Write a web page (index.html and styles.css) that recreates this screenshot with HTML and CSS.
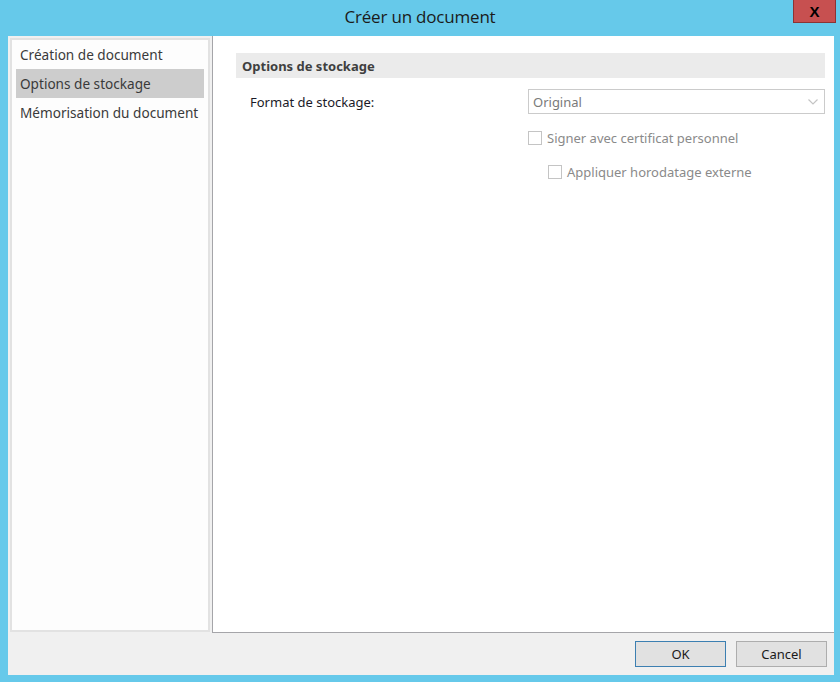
FILE: index.html
```html
<!DOCTYPE html>
<html lang="fr">
<head>
<meta charset="utf-8">
<title>Créer un document</title>
<link rel="stylesheet" href="styles.css">
</head>
<body>
<div class="window">
  <div class="titlebar">
    <span class="spacer"></span>
    <span class="title">Créer un document</span>
    <span class="controls"><span class="close">X</span></span>
  </div>
  <div class="client">
    <div class="main">
      <ul class="nav">
        <li class="nav-item">Création de document</li>
        <li class="nav-item selected">Options de stockage</li>
        <li class="nav-item">Mémorisation du document</li>
      </ul>
      <div class="content">
        <div class="section-header">Options de stockage</div>
        <div class="form-row">
          <span class="label">Format de stockage:</span>
          <div class="select">
            <span class="select-value">Original</span>
            <svg class="chevron" width="10" height="6" viewBox="0 0 10 6"><path d="M0.5 0.5 L5 5 L9.5 0.5" fill="none" stroke="#c4c4c4" stroke-width="1.2"/></svg>
          </div>
        </div>
        <div class="check-row lvl1">
          <span class="box"></span><span class="check-label">Signer avec certificat personnel</span>
        </div>
        <div class="check-row lvl2">
          <span class="box"></span><span class="check-label">Appliquer horodatage externe</span>
        </div>
      </div>
    </div>
    <div class="footer">
      <button class="btn default">OK</button>
      <button class="btn">Cancel</button>
    </div>
  </div>
</div>
</body>
</html>
```
FILE: styles.css
```css
* { box-sizing: border-box; }
html, body { margin: 0; padding: 0; }
body {
  width: 840px;
  height: 682px;
  background: #66c9ea;
  font-family: "Noto Sans", "Open Sans", sans-serif;
  font-size: 13px;
  overflow: hidden;
}
.window {
  display: flex;
  flex-direction: column;
  height: 682px;
}
.titlebar {
  height: 36px;
  display: grid;
  grid-template-columns: 1fr auto 1fr;
  align-items: start;
}
.title {
  font-family: "Open Sans", "Noto Sans", sans-serif;
  font-size: 17px;
  color: #1b1b1b;
  margin-top: 5px;
  letter-spacing: -0.2px;
}
.controls {
  display: flex;
  justify-content: flex-end;
  padding-right: 4px;
}
.close {
  width: 43px;
  height: 23px;
  background: #c75050;
  border: 1px solid #8c3434;
  border-top: none;
  color: #000;
  font-family: "Liberation Sans", sans-serif;
  font-weight: bold;
  font-size: 15px;
  display: flex;
  align-items: center;
  justify-content: center;
}
.client {
  flex: 1;
  margin: 0 6px 7px 8px;
  background: #f0f0f0;
  display: flex;
  flex-direction: column;
}
.main {
  flex: 1;
  display: flex;
}
.nav {
  list-style: none;
  margin: 2px 2px 1px 2px;
  padding: 0 4px;
  width: 200px;
  background: #fdfdfd;
  border: 2px solid #e2e2e2;
}
.nav-item {
  height: 29px;
  line-height: 29px;
  padding-left: 4px;
  color: #3a3a3a;
  font-size: 13.6px;
  white-space: nowrap;
}
.nav-item.selected {
  background: #cdcdcd;
}
.content {
  flex: 1;
  background: #fff;
  border-left: 1px solid #a5a5a9;
  border-bottom: 1px solid #a5a5a9;
  padding: 17px 9px 0 23px;
}
.section-header {
  height: 25px;
  background: #ebebeb;
  color: #3f3f3f;
  font-weight: bold;
  padding-left: 6px;
  line-height: 26px;
}
.form-row {
  display: flex;
  align-items: center;
  margin-top: 11px;
}
.label {
  width: 292px;
  padding-left: 14px;
  color: #1a1a28;
}
.select {
  flex: 1;
  height: 25px;
  border: 1px solid #cbcbcb;
  display: flex;
  align-items: center;
  justify-content: space-between;
  padding: 0 6px 0 4px;
  color: #7a7a7a;
}
.check-row {
  display: flex;
  align-items: center;
  color: #8a8a8a;
}
.check-row.lvl1 { padding-left: 292px; margin-top: 15px; }
.check-row.lvl2 { padding-left: 312px; margin-top: 16px; }
.box {
  width: 14px;
  height: 14px;
  border: 1px solid #c4c4c4;
  background: #fff;
  margin-right: 5px;
}
.footer {
  height: 42px;
  display: flex;
  justify-content: flex-end;
  align-items: flex-start;
  gap: 10px;
  padding: 8px 7px 0 0;
}
.btn {
  width: 91px;
  height: 26px;
  background: #e1e1e1;
  border: 1px solid #adadad;
  font-family: "Noto Sans", "Open Sans", sans-serif;
  font-size: 13px;
  color: #1a1a1a;
  padding: 0;
}
.btn.default {
  border-color: #3c7fb1;
}
```
